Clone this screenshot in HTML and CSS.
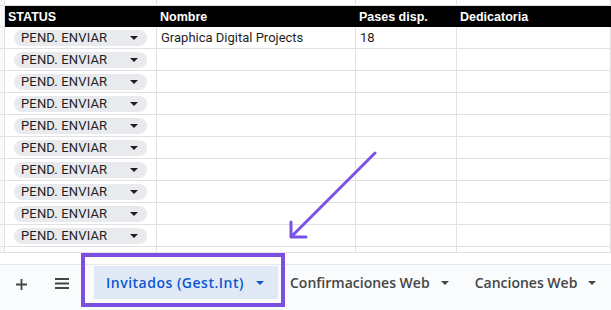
FILE: index.html
```html
<!DOCTYPE html>
<html lang="es">
<head>
    <meta charset="UTF-8">
    <meta name="viewport" content="width=device-width, initial-scale=1.0">
    <title>Invitados</title>
    <link rel="stylesheet" href="styles.css">
</head>
<body>
    <div class="page">
        <div class="grid">
            <div class="cell rownum top"></div><div class="cell top"></div><div class="cell top"></div><div class="cell top"></div><div class="cell top"></div>

            <div class="cell rownum"></div>
            <div class="cell head">STATUS</div>
            <div class="cell head">Nombre</div>
            <div class="cell head">Pases disp.</div>
            <div class="cell head">Dedicatoria</div>

            <div class="cell rownum"></div><div class="cell"><span class="chip">PEND. ENVIAR<i class="caret"></i></span></div><div class="cell">Graphica Digital Projects</div><div class="cell">18</div><div class="cell"></div>
            <div class="cell rownum"></div><div class="cell"><span class="chip">PEND. ENVIAR<i class="caret"></i></span></div><div class="cell"></div><div class="cell"></div><div class="cell"></div>
            <div class="cell rownum"></div><div class="cell"><span class="chip">PEND. ENVIAR<i class="caret"></i></span></div><div class="cell"></div><div class="cell"></div><div class="cell"></div>
            <div class="cell rownum"></div><div class="cell"><span class="chip">PEND. ENVIAR<i class="caret"></i></span></div><div class="cell"></div><div class="cell"></div><div class="cell"></div>
            <div class="cell rownum"></div><div class="cell"><span class="chip">PEND. ENVIAR<i class="caret"></i></span></div><div class="cell"></div><div class="cell"></div><div class="cell"></div>
            <div class="cell rownum"></div><div class="cell"><span class="chip">PEND. ENVIAR<i class="caret"></i></span></div><div class="cell"></div><div class="cell"></div><div class="cell"></div>
            <div class="cell rownum"></div><div class="cell"><span class="chip">PEND. ENVIAR<i class="caret"></i></span></div><div class="cell"></div><div class="cell"></div><div class="cell"></div>
            <div class="cell rownum"></div><div class="cell"><span class="chip">PEND. ENVIAR<i class="caret"></i></span></div><div class="cell"></div><div class="cell"></div><div class="cell"></div>
            <div class="cell rownum"></div><div class="cell"><span class="chip">PEND. ENVIAR<i class="caret"></i></span></div><div class="cell"></div><div class="cell"></div><div class="cell"></div>
            <div class="cell rownum"></div><div class="cell"><span class="chip">PEND. ENVIAR<i class="caret"></i></span></div><div class="cell"></div><div class="cell"></div><div class="cell"></div>

            <div class="cell rownum last"></div><div class="cell last"></div><div class="cell last"></div><div class="cell last"></div><div class="cell last"></div>
        </div>

        <div class="spacer"></div>

        <div class="tabbar">
            <span class="tool plus">
                <svg width="11" height="11" viewBox="0 0 11 11"><path d="M5.5 0v11M0 5.5h11" stroke="#444746" stroke-width="1.8"/></svg>
            </span>
            <span class="tool menu">
                <svg width="14" height="11" viewBox="0 0 14 11"><path d="M0 1h14M0 5.5h14M0 10h14" stroke="#444746" stroke-width="1.8"/></svg>
            </span>
            <div class="tab active">Invitados (Gest.Int)<i class="caret"></i></div>
            <div class="tab">Confirmaciones Web<i class="caret"></i></div>
            <div class="tab">Canciones Web<i class="caret"></i></div>
        </div>

        <!-- resaltado de la pestaña -->
        <div class="highlight"></div>
        <svg class="arrow" width="100" height="100" viewBox="0 0 100 100">
            <path d="M90 5L6 89M6 89V74M6 89H21" fill="none" stroke="#7b52e6" stroke-width="3" stroke-linecap="round" stroke-linejoin="round"/>
        </svg>
    </div>
</body>
</html>
```

FILE: styles.css
```css
body {
    margin: 0;
    font-family: Roboto, "Liberation Sans", Arial, sans-serif;
    background-color: #ffffff;
}
.page {
    position: relative;
    width: 611px;
    height: 310px;
    overflow: hidden;
    display: flex;
    flex-direction: column;
}
.grid {
    display: grid;
    grid-template-columns: 5px 152px 199px 101px 1fr;
    grid-template-rows: 6px 21px repeat(10, 22px) 6px;
}
.cell {
    box-sizing: border-box;
    border-right: 1px solid #e1e1e1;
    border-bottom: 1px solid #e1e1e1;
    display: flex;
    align-items: center;
    padding-left: 4px;
    font-size: 13px;
    color: #1f1f1f;
    white-space: nowrap;
}
.rownum {
    background-color: #f8f9fa;
    padding: 0;
}
.head {
    background-color: #000000;
    color: #ffffff;
    font-family: "Liberation Sans", Arial, sans-serif;
    font-weight: bold;
    font-size: 12.5px;
    border-right: none;
    border-bottom: none;
    padding-left: 3px;
}
.chip {
    box-sizing: border-box;
    display: flex;
    align-items: center;
    justify-content: space-between;
    width: 133px;
    height: 16px;
    margin-left: 5px;
    padding: 0 9px 0 7px;
    border-radius: 8px;
    background-color: #e8eaed;
    color: #1f1f1f;
    font-size: 13px;
    letter-spacing: 0.15px;
}
.caret {
    display: inline-block;
    width: 0;
    height: 0;
    border-left: 4px solid transparent;
    border-right: 4px solid transparent;
    border-top: 4px solid #1f1f1f;
}
.spacer {
    height: 11px;
}
.tabbar {
    flex: 1;
    display: flex;
    align-items: center;
    padding-bottom: 10px;
    background-color: #f9fbfd;
    border-top: 1px solid #e6e8eb;
}
.tool {
    display: flex;
    align-items: center;
    justify-content: center;
    flex-shrink: 0;
}
.plus {
    margin-left: 16px;
    margin-top: 3px;
}
.menu {
    margin-left: 28px;
    margin-top: 1px;
}
.tab {
    display: flex;
    flex-shrink: 0;
    align-items: center;
    gap: 11px;
    height: 33px;
    padding: 0 14px 0 12px;
    font-family: "Open Sans", Roboto, sans-serif;
    font-size: 14px;
    font-weight: 600;
    white-space: nowrap;
    color: #444746;
}
.tab .caret {
    border-top-color: #444746;
}
.tab.active {
    margin-left: 25px;
    width: 184px;
    box-sizing: border-box;
    justify-content: space-between;
    padding: 0 14px 0 12px;
    letter-spacing: 0.5px;
    background-color: #e1e9f7;
    color: #0b57d0;
}
.tab.active .caret {
    border-top-color: #0b57d0;
}
.highlight {
    position: absolute;
    left: 81px;
    top: 253px;
    width: 204px;
    height: 54px;
    box-sizing: border-box;
    border: 4px solid #7b4fe2;
}
.arrow {
    position: absolute;
    left: 285px;
    top: 148px;
}
```
